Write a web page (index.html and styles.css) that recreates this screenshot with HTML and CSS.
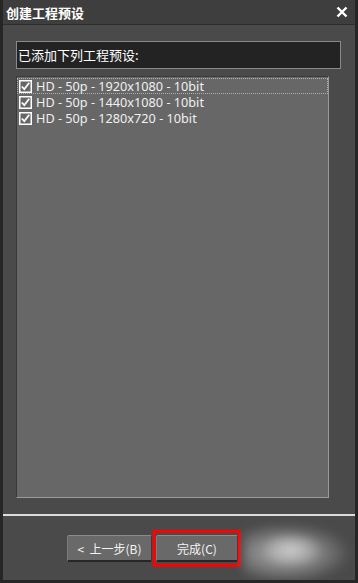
FILE: index.html
```html
<!DOCTYPE html>
<html lang="zh-CN">
<head>
    <meta charset="UTF-8">
    <meta name="viewport" content="width=device-width, initial-scale=1.0">
    <title>创建工程预设</title>
    <link rel="stylesheet" href="styles.css">
</head>
<body>
    <div class="window">
        <div class="titlebar">
            <span class="title">创建工程预设</span>
            <svg class="close" width="12" height="12" viewBox="0 0 12 12">
                <path d="M1.5 1.5 L10.5 10.5 M10.5 1.5 L1.5 10.5" stroke="#fff" stroke-width="2.4" fill="none"/>
            </svg>
        </div>
        <div class="content">
            <div class="header">已添加下列工程预设:</div>
            <div class="list">
                <div class="row focus">
                    <svg class="check" width="13" height="13" viewBox="0 0 13 13">
                        <rect x="0.75" y="0.75" width="11.5" height="11.5" fill="none" stroke="#fff" stroke-width="1.5"/>
                        <path d="M2.8 6.5 L5.3 9.2 L10.2 2.8" stroke="#fff" stroke-width="1.8" fill="none"/>
                    </svg>
                    <span class="label">HD - 50p - 1920x1080 - 10bit</span>
                </div>
                <div class="row">
                    <svg class="check" width="13" height="13" viewBox="0 0 13 13">
                        <rect x="0.75" y="0.75" width="11.5" height="11.5" fill="none" stroke="#fff" stroke-width="1.5"/>
                        <path d="M2.8 6.5 L5.3 9.2 L10.2 2.8" stroke="#fff" stroke-width="1.8" fill="none"/>
                    </svg>
                    <span class="label">HD - 50p - 1440x1080 - 10bit</span>
                </div>
                <div class="row">
                    <svg class="check" width="13" height="13" viewBox="0 0 13 13">
                        <rect x="0.75" y="0.75" width="11.5" height="11.5" fill="none" stroke="#fff" stroke-width="1.5"/>
                        <path d="M2.8 6.5 L5.3 9.2 L10.2 2.8" stroke="#fff" stroke-width="1.8" fill="none"/>
                    </svg>
                    <span class="label">HD - 50p - 1280x720 - 10bit</span>
                </div>
            </div>
        </div>
        <div class="separator"></div>
        <div class="footer">
            <button class="btn back">&lt;&nbsp; 上一步(B)</button>
            <span class="highlight"><button class="btn finish">完成(C)</button></span>
            <div class="blur"></div>
            <div class="blur glow"></div>
        </div>
    </div>
</body>
</html>
```

FILE: styles.css
```css
body{
    margin: 0;
    background-color: #1a1a1a;
    font-family: "Noto Sans", "Noto Sans CJK SC", sans-serif;
}
.window{
    width: 358px;
    height: 583px;
    box-sizing: border-box;
    background-color: #4a4a4a;
    border-left: 3px solid #262626;
    border-right: 3px solid #262626;
    border-bottom: 3px solid #262626;
    position: relative;
    overflow: hidden;
}
.titlebar{
    height: 24px;
    background-color: #3e3e3e;
    border-bottom: 1px solid #2c2c2c;
    display: flex;
    align-items: center;
    justify-content: space-between;
    padding: 0 7px 0 6px;
    margin: 0 -3px;
}
.title{
    color: #fff;
    font-family: "Noto Sans CJK SC", sans-serif;
    font-weight: bold;
    font-size: 13px;
}
.close{
    margin-right: 3px;
}
.content{
    padding: 16px 0 0 13px;
}
.header{
    width: 325px;
    height: 28px;
    box-sizing: border-box;
    background-color: #232323;
    border: 1px solid #8a8a8a;
    color: #fff;
    font-family: "Noto Sans CJK SC", sans-serif;
    font-size: 13px;
    line-height: 25px;
    padding-left: 1px;
}
.list{
    margin-top: 7px;
    width: 313px;
    height: 422px;
    box-sizing: border-box;
    background-color: #676767;
    border-top: 1px solid #3a3a3a;
    border-left: 1px solid #3a3a3a;
    border-right: 1px solid #9a9a9a;
    border-bottom: 1px solid #9a9a9a;
    padding-top: 1px;
}
.row{
    height: 16px;
    box-sizing: border-box;
    display: flex;
    align-items: center;
    gap: 4px;
    padding-left: 1px;
    border: 1px dotted transparent;
}
.row.focus{
    border-color: #b0b0b0;
}
.label{
    color: #f0f0f0;
    font-size: 12.7px;
    line-height: 14px;
    white-space: nowrap;
}
.separator{
    height: 2px;
    background-color: #dcdcdc;
    margin-top: 16px;
}
.footer{
    display: flex;
    align-items: center;
    padding: 14px 0 0 64px;
    position: relative;
}
.btn{
    height: 27px;
    box-sizing: border-box;
    background-color: #696969;
    color: #f4f4f4;
    font-family: "Noto Sans CJK SC", sans-serif;
    font-size: 12px;
    border: none;
    border-top: 1px solid #8c8c8c;
    border-left: 1px solid #7c7c7c;
    border-bottom: 2px solid #262626;
    border-right: 1px solid #3a3a3a;
    border-radius: 2px;
    padding: 0;
}
.back{
    width: 85px;
}
.finish{
    width: 82px;
    display: block;
}
.highlight{
    margin-left: 1px;
    border: 3px solid #ff0000;
    padding: 2px 0;
}
.blur{
    position: absolute;
    left: 240px;
    top: 8px;
    width: 106px;
    height: 58px;
    background: radial-gradient(ellipse at 40% 50%, #a8a8a8 0%, #828282 38%, rgba(74,74,74,0) 74%);
    filter: blur(5px);
}
.blur.glow{
    left: 258px;
    top: 18px;
    width: 60px;
    height: 32px;
    background: radial-gradient(ellipse at 50% 50%, #c8c8c8 0%, rgba(180,180,180,0) 75%);
    filter: blur(3px);
}
```
